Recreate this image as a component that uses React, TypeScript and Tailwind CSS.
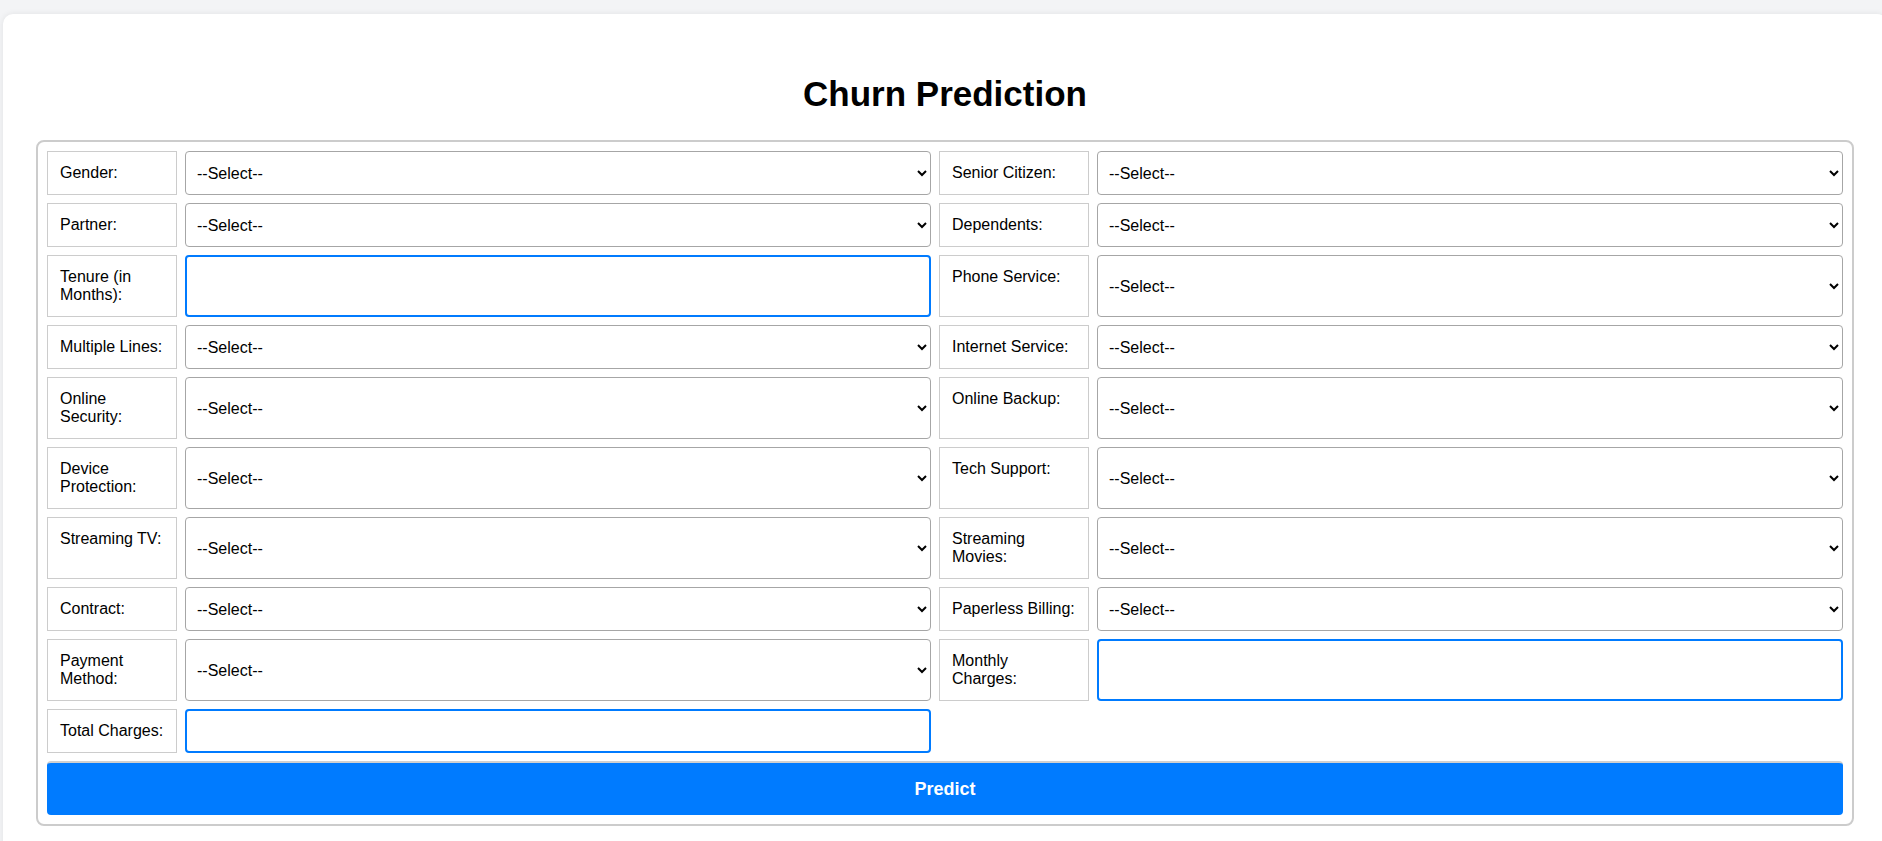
import React from 'react'

type Field = { label: string; type: 'select' | 'input' }

const rows: [Field, Field | null][] = [
  [{ label: 'Gender:', type: 'select' }, { label: 'Senior Citizen:', type: 'select' }],
  [{ label: 'Partner:', type: 'select' }, { label: 'Dependents:', type: 'select' }],
  [{ label: 'Tenure (in Months):', type: 'input' }, { label: 'Phone Service:', type: 'select' }],
  [{ label: 'Multiple Lines:', type: 'select' }, { label: 'Internet Service:', type: 'select' }],
  [{ label: 'Online Security:', type: 'select' }, { label: 'Online Backup:', type: 'select' }],
  [{ label: 'Device Protection:', type: 'select' }, { label: 'Tech Support:', type: 'select' }],
  [{ label: 'Streaming TV:', type: 'select' }, { label: 'Streaming Movies:', type: 'select' }],
  [{ label: 'Contract:', type: 'select' }, { label: 'Paperless Billing:', type: 'select' }],
  [{ label: 'Payment Method:', type: 'select' }, { label: 'Monthly Charges:', type: 'input' }],
  [{ label: 'Total Charges:', type: 'input' }, null],
]

function Control({ field }: { field: Field }) {
  if (field.type === 'input') {
    return (
      <input
        type="text"
        className="self-stretch w-full bg-white border-2 border-[#007bff] rounded-[4px] px-[10px] text-[16px] outline-none"
      />
    )
  }
  return (
    <select
      defaultValue=""
      className="self-stretch w-full bg-white border border-[#a6a6a6] rounded-[4px] pl-[7px] pr-[9px] text-[16px] text-black"
    >
      <option value="">--Select--</option>
    </select>
  )
}

export default function App() {
  return (
    <div className="min-h-screen bg-[#f3f4f6] pt-[14px] pl-[3px] overflow-hidden font-['Liberation_Sans',Arial,sans-serif] text-black">
      <div className="bg-white rounded-[10px] shadow-[0_0_6px_rgba(0,0,0,0.08)] w-[1884px] pl-[33px] pr-[33px] pt-[60px] pb-[40px]">
        {/* Title */}
        <h1 className="text-center text-[35px] leading-[40px] font-bold mb-[26px]">Churn Prediction</h1>

        {/* Form */}
        <form className="border-2 border-[#cccccc] rounded-[8px] p-[9px]">
          <div className="grid grid-cols-[130px_1fr_150px_1fr] gap-[8px]">
            {rows.map(([left, right], i) => (
              <React.Fragment key={i}>
                <div className="border border-[#cccccc] pl-[12px] pr-[8px] py-[12px] text-[16px] leading-[18px]">
                  {left.label}
                </div>
                <Control field={left} />
                {right ? (
                  <>
                    <div className="border border-[#cccccc] px-[12px] py-[12px] text-[16px] leading-[18px]">
                      {right.label}
                    </div>
                    <Control field={right} />
                  </>
                ) : (
                  <div className="col-span-2" />
                )}
              </React.Fragment>
            ))}
            <button
              type="button"
              className="col-span-4 h-[54px] bg-[#007bff] border-t-2 border-[#d0d0d0] rounded-[4px] text-white text-[18px] font-bold"
            >
              Predict
            </button>
          </div>
        </form>
      </div>
    </div>
  )
}
